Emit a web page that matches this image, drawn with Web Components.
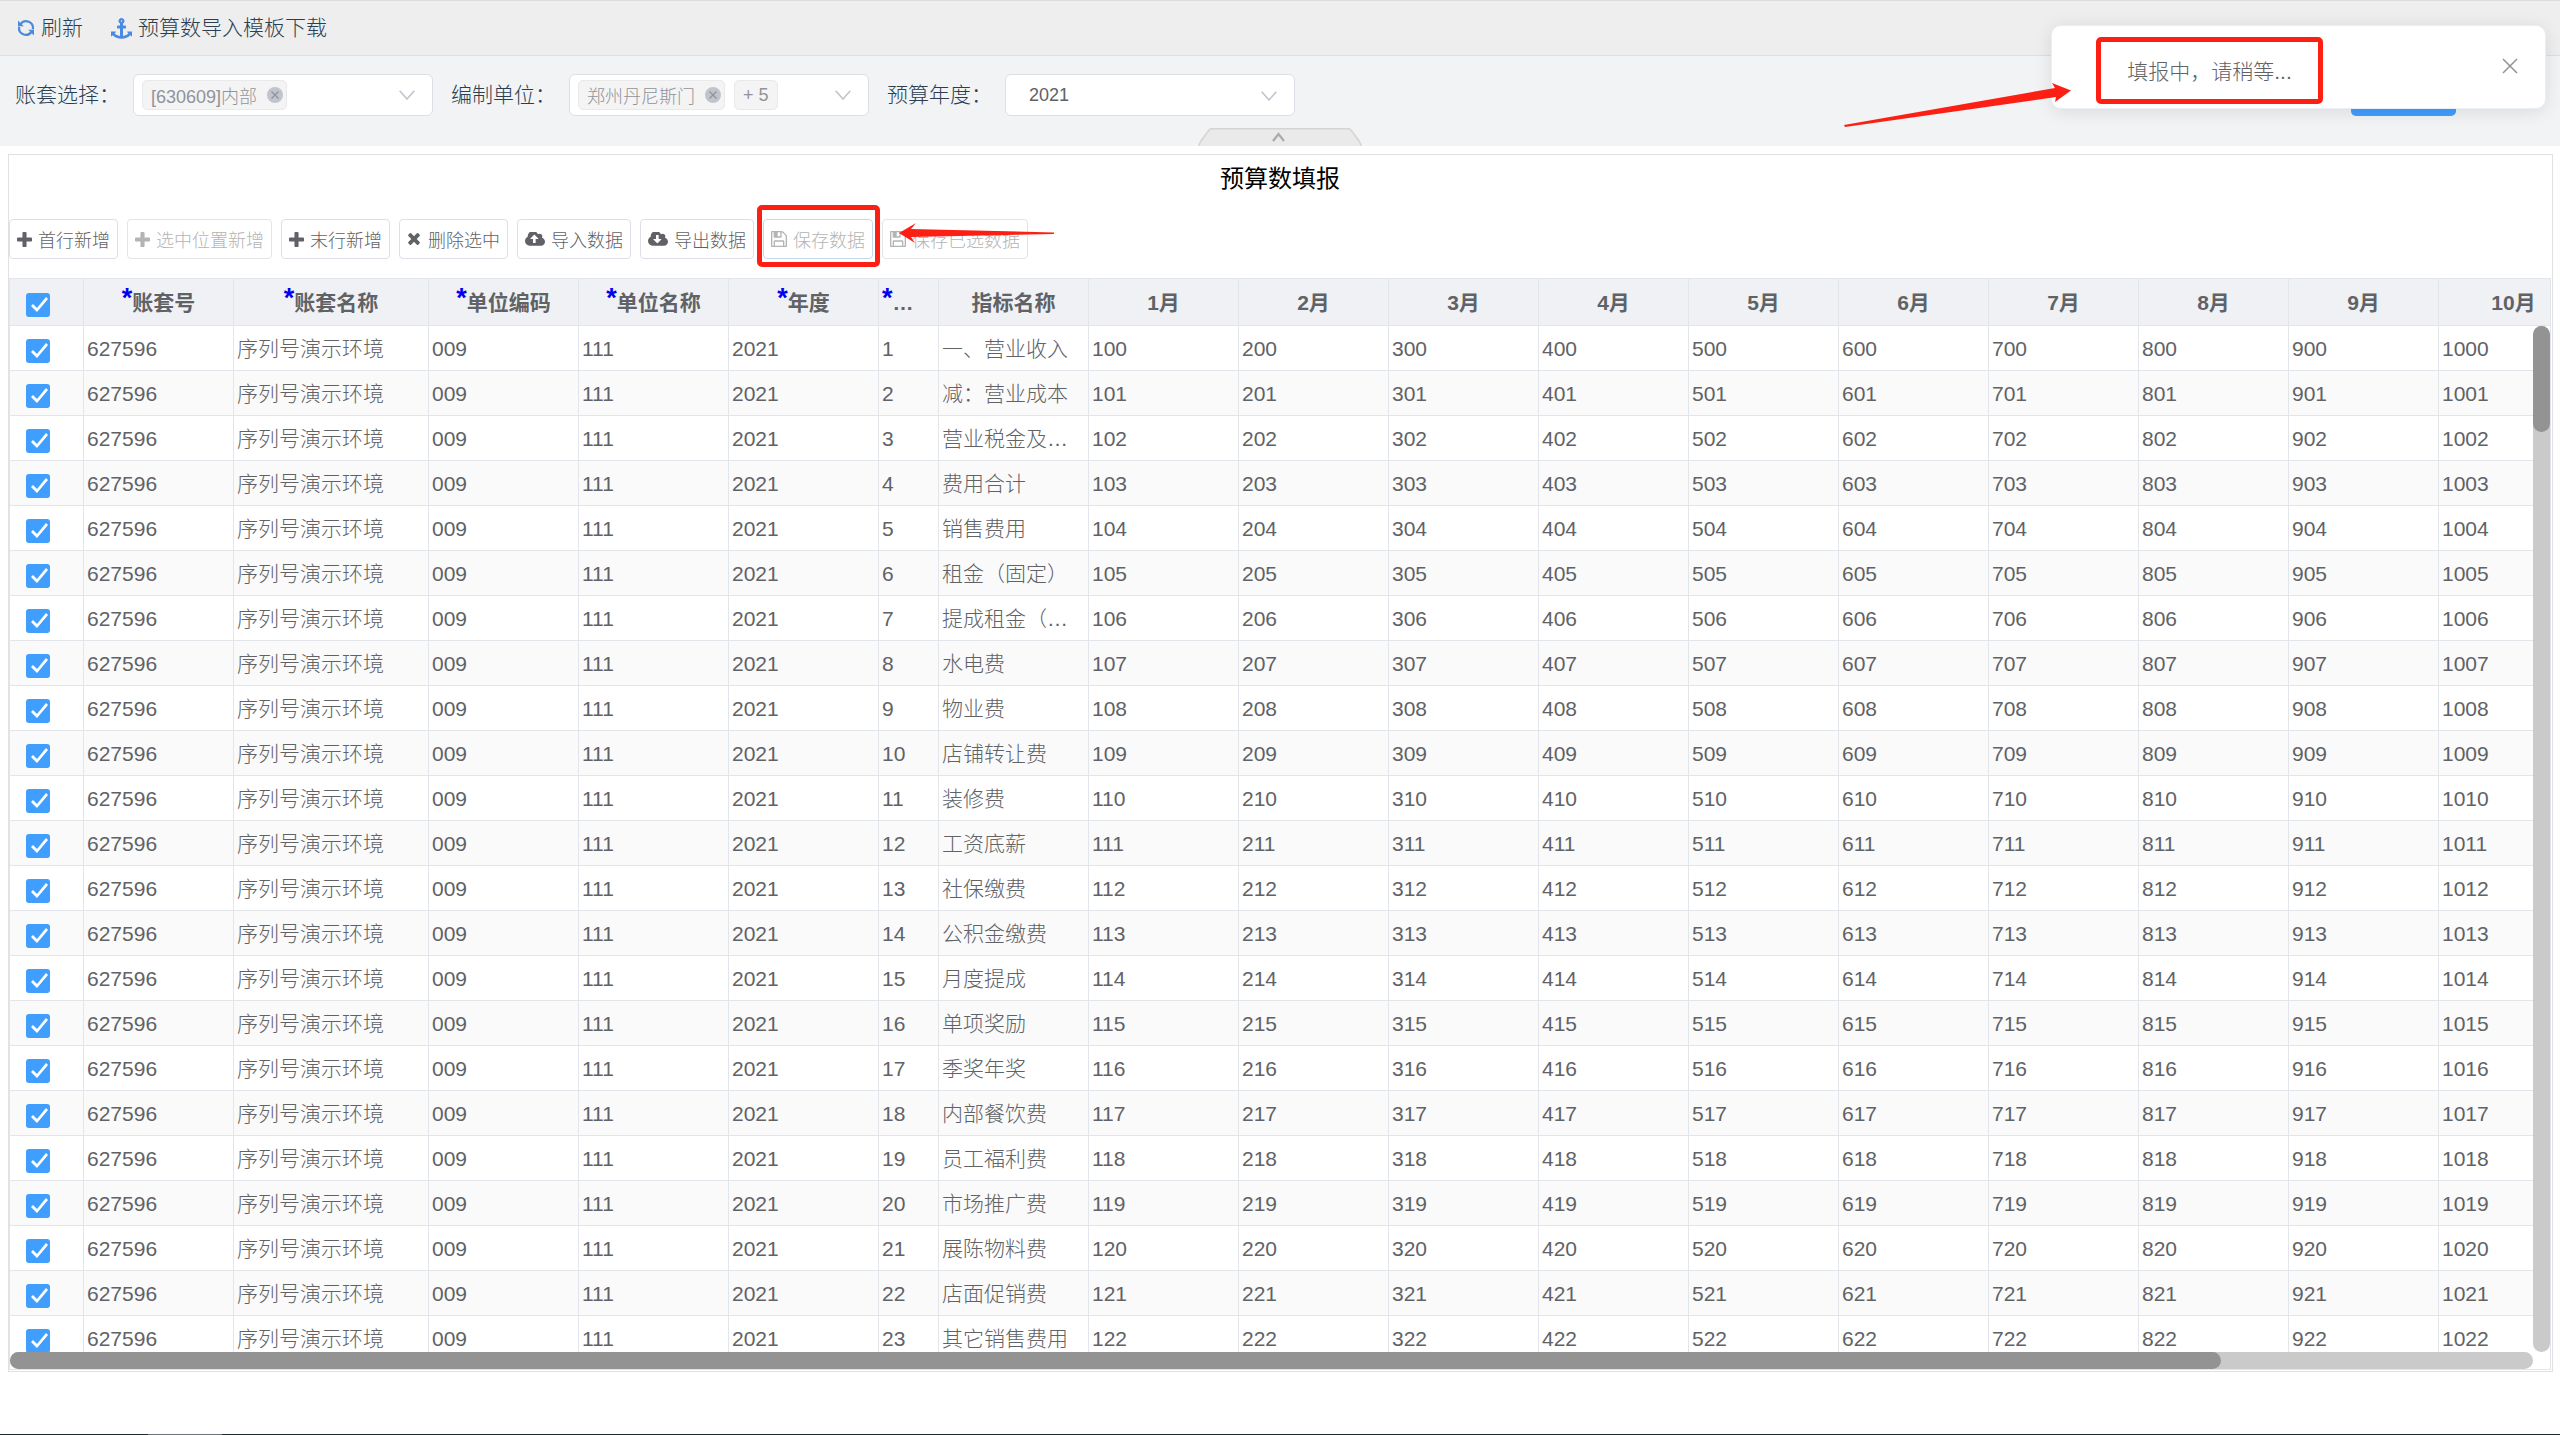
<!DOCTYPE html>
<html lang="zh-CN">
<head>
<meta charset="utf-8">
<title>预算数填报</title>
<style>
html, body { height: 100%; }
body {
  margin: 0;
  overflow: hidden;
  background: #fff;
  font-family: "Liberation Sans", "Noto Sans CJK SC", sans-serif;
  font-weight: 300;
  color: #606266;
}
</style>
</head>
<body>
<budget-page></budget-page>
<script>
const CLOUD = 'M1856 1152q0 159-112.5 271.5t-271.5 112.5h-1088q-185 0-316.5-131.5t-131.5-316.5q0-130 70-240t188-165q-2-30-2-43 0-212 150-362t362-150q156 0 285.5 87t188.5 231q71-62 166-62 106 0 181 75t75 181q0 76-41 138 130 31 213.5 135.5t83.5 238.5z';
const ICONS = {
  plus: ['192 128 1408 1408', '<path d="M1600 736v192q0 40-28 68t-68 28h-416v416q0 40-28 68t-68 28h-192q-40 0-68-28t-28-68v-416h-416q-40 0-68-28t-28-68v-192q0-40 28-68t68-28h416v-416q0-40 28-68t68-28h192q40 0 68 28t28 68v416h416q40 0 68 28t28 68z"/>'],
  times: ['192 256 1408 1408', '<path d="M1490 1322q0 40-28 68l-136 136q-28 28-68 28t-68-28l-294-294-294 294q-28 28-68 28t-68-28l-136-136q-28-28-28-68t28-68l294-294-294-294q-28-28-28-68t28-68l136-136q28-28 68-28t68 28l294 294 294-294q28-28 68-28t68 28l136 136q28 28 28 68t-28 68l-294 294 294 294q28 28 28 68z"/>'],
  upload: ['-64 256 1920 1280', `<path fill-rule="evenodd" d="M1216 864q0-14-9-23l-352-352q-9-9-23-9t-23 9l-351 351q-10 12-10 24 0 14 9 23t23 9h224v352q0 13 9.5 22.5t22.5 9.5h192q13 0 22.5-9.5t9.5-22.5v-352h224q13 0 22.5-9.5t9.5-22.5z${CLOUD}"/>`],
  download: ['-64 256 1920 1280', `<path fill-rule="evenodd" d="M1216 928q0 14-9 23l-352 352q-9 9-23 9t-23-9l-351-351q-10-12-10-24q0-13 9.500-22.500t22.500-9.500h224v-352q0-13 9.500-22.500t22.500-9.500h192q13 0 22.500 9.500t9.500 22.500v352h224q13 0 22.500 9.500t9.500 22.500z${CLOUD}"/>`],
  save: ['128 128 1536 1536', '<path fill-rule="evenodd" d="M512 1536h768v-384h-768v384zm896 0h128v-896q0-14-10-38.500t-20-34.500l-281-281q-10-10-34-20t-39-10v416q0 40-28 68t-68 28h-576q-40 0-68-28t-28-68v-416h-128v1280h128v-416q0-40 28-68t68-28h832q40 0 68 28t28 68v416zm-384-928v-320q0-13-9.500-22.500t-22.500-9.500h-192q-13 0-22.500 9.500t-9.500 22.500v320q0 13 9.500 22.500t22.500 9.500h192q13 0 22.500-9.500t9.500-22.500zm640 32v928q0 40-28 68t-68 28h-1344q-40 0-68-28t-28-68v-1344q0-40 28-68t68-28h928q40 0 88 20t76 48l280 280q28 28 48 76t20 88z"/>'],
  anchor: ['0 0 1792 1792', '<path d="M960 256q0-26-19-45t-45-19-45 19-19 45 19 45 45 19 45-19 19-45zm832 928v352q0 22-20 30-8 2-12 2-12 0-23-9l-93-93q-119 143-318.500 226.500t-429.500 83.500-429.500-83.500-318.500-226.500l-93 93q-9 9-23 9-4 0-12-2-20-8-20-30v-352q0-14 9-23t23-9h352q22 0 30 20 8 19-7 35l-100 100q67 91 189.500 153.500t271.500 82.500v-647h-192q-26 0-45-19t-19-45v-128q0-26 19-45t45-19h192v-163q-58-34-93-92.500t-35-128.500q0-106 75-181t181-75 181 75 75 181q0 70-35 128.500t-93 92.500v163h192q26 0 45 19t19 45v128q0 26-19 45t-45 19h-192v647q149-20 271.500-82.500t189.500-153.500l-100-100q-15-16-7-35 8-20 30-20h352q14 0 23 9t9 23z"/>'],
  refresh: ['0 0 18 18', '<g fill="none" stroke="currentColor" stroke-width="2.200"><path d="M3.600 5A6.800 6.800 0 0 1 15.800 10.200M14.400 13A6.800 6.800 0 0 1 2.200 7.800"/></g><path fill="currentColor" d="M1 1.500V7.300H6.800ZM17 16.500V10.700H11.200Z"/>'],
  down: ['0 0 16 10', '<path fill="none" stroke="currentColor" stroke-width="1.600" d="M.7.7 8 9 15.300.7"/>'],
  close: ['0 0 16 16', '<path fill="none" stroke="currentColor" stroke-width="1.500" d="M1 1l14 14M15 1L1 15"/>'],
  tagclose: ['0 0 16 16', '<circle cx="8" cy="8" r="8" fill="#c0c4cc"/><path stroke="#909399" stroke-width="1.300" d="M4.500 4.500l7 7M11.500 4.500l-7 7"/>']
};
const icon = (n, w, h) => `<svg class="i" viewBox="${ICONS[n][0]}" width="${w}" height="${h || w}" fill="currentColor" aria-hidden="true">${ICONS[n][1]}</svg>`;

function define(name, render) {
  customElements.define(name, class extends HTMLElement {
    constructor() { super(); this.attachShadow({ mode: 'open' }); }
    connectedCallback() {
      this.shadowRoot.innerHTML = '<style>*{box-sizing:border-box}button,input,select{font:inherit;color:inherit}svg{display:block;flex:none}</style>' + render(this);
    }
  });
}

/* Borderless command in the top strip */
define('nav-command', el => `<style>
:host { display: block; }
button { display: flex; align-items: center; gap: 6px; padding: 0; border: 0; background: none; font-size: 21px; line-height: 30px; color: #2c3e50; }
.i { color: #4a8ae0; }
</style><button type="button">${icon(el.getAttribute('icon'), +el.getAttribute('size'))}<slot></slot></button>`);

/* Closable or plain tag in a multiple select */
define('pick-tag', el => `<style>
:host { display: flex; align-items: center; gap: 10px; height: 30px; padding: 0 8px; border: 1px solid #e9e9eb; border-radius: 5px; background: #f4f4f5; color: #909399; font-size: 18px; white-space: nowrap; flex: none; }
:host([closable]) { padding-right: 3px; }
button { padding: 0; border: 0; background: none; border-radius: 8px; }
</style><slot></slot>${el.hasAttribute('closable') ? `<button type="button" aria-label="移除">${icon('tagclose', 16)}</button>` : ''}`);

define('filter-field', el => {
  const single = el.getAttribute('value');
  return `<style>
:host { display: flex; align-items: center; gap: 13px; }
label { font-size: 21px; line-height: 30px; color: #2c3e50; white-space: nowrap; }
.box { position: relative; display: flex; align-items: center; gap: 9px; width: 300px; height: 42px; padding: 0 17px 0 8px; border: 1px solid #dcdfe6; border-radius: 6px; background: #fff; color: #606266; }
.single { width: 290px; padding: 0; }
input { flex: 1; min-width: 0; width: 0; border: 0; outline: 0; background: none; padding: 0; }
select { appearance: none; width: 100%; height: 100%; padding: 0 40px 0 23px; border: 0; background: none; font-size: 18px; }
.box > .i { color: #c0c4cc; }
.single > .i { position: absolute; right: 17px; top: 16px; pointer-events: none; }
</style><label for="c">${el.getAttribute('label')}：</label>
<div class="box ${single ? 'single' : ''}">${single ? `<select id="c"><option>${single}</option></select>` : '<slot></slot><input id="c" readonly>'}${icon('down', 16, 10)}</div>`;
});

define('top-strip', () => `<style>
:host { display: flex; align-items: center; gap: 28px; height: 56px; padding: 0 17px; background: #eee; border-top: 1px solid #dcdcdc; border-bottom: 1px solid #dcdee0; }
</style><slot></slot>`);

define('filter-bar', () => `<style>
:host { position: relative; display: flex; align-items: flex-start; gap: 18px; height: 90px; padding: 18px 104px 0 15px; background: #f1f3f5; }
.query { margin-left: auto; width: 105px; height: 42px; border: 0; border-radius: 5px; background: #409eff; }
.fold { position: absolute; left: 50%; bottom: 0; width: 164px; height: 18px; margin-left: -82px; padding: 0; border: 0; background: none; }
</style><slot></slot><button class="query" type="button" aria-label="查询"></button>
<button class="fold" type="button" aria-label="收起"><svg width="164" height="18" viewBox="0 0 164 18"><path d="M1 18Q1 16 3 13L11 2Q12 .700 14 .700H150Q152 .700 153 2L161 13Q163 16 163 18" fill="#eaeaea" stroke="#d4d4d4" stroke-width="1.500"/><path d="M75 13L80.500 6 86 13" fill="none" stroke="#aaa" stroke-width="2.200"/></svg></button>`);

define('tool-button', el => {
  const n = el.getAttribute('icon');
  const w = { plus: 15, times: 14, upload: 20, download: 20, save: 16 }[n];
  const h = n.endsWith('load') ? 14 : w;
  return `<style>
:host { display: block; position: relative; }
button { display: flex; align-items: center; gap: 6px; height: 40px; padding: 0 7px; border: 1px solid #dcdfe6; border-radius: 4px; background: #fff; font-size: 18px; color: #606266; white-space: nowrap; }
button:disabled { color: #b4b4b4; border-color: #e2e4e8; }
:host([icon="times"]) button { gap: 7px; }
:host([marked]) button { border-color: #c6d8ee; }
:host([marked])::after { content: ""; position: absolute; inset: -14px -7px -8px -6px; border: 5px solid #fc2014; border-radius: 5px; }
.arrow { position: absolute; left: 136px; top: 3px; z-index: 2; }
</style><button type="button" ${el.hasAttribute('off') ? 'disabled' : ''}>${icon(n, w, h)}<slot></slot></button>
${el.hasAttribute('marked') ? '<svg class="arrow" width="156" height="22" viewBox="0 0 156 22" aria-hidden="true"><path fill="#fc2014" d="M0 11L17 1 12 7 155 10.500V12L12 15 16 21Z"/></svg>' : ''}`;
});

const NAMES = ['一、营业收入', '减：营业成本', '营业税金及…', '费用合计', '销售费用', '租金（固定）', '提成租金（…', '水电费', '物业费', '店铺转让费', '装修费', '工资底薪', '社保缴费', '公积金缴费', '月度提成', '单项奖励', '季奖年奖', '内部餐饮费', '员工福利费', '市场推广费', '展陈物料费', '店面促销费', '其它销售费用'];
const MONTHS = Array.from({ length: 10 }, (_, i) => i + 1);
const COLS = [74, 150, 195, 150, 150, 150, 60, 150, ...MONTHS.map(() => 150)];

define('budget-grid', () => {
  const cols = `<colgroup>${COLS.map(w => `<col style="width:${w}px">`).join('')}</colgroup>`;
  const head = ['账套号', '账套名称', '单位编码', '单位名称', '年度'].map(t => `<th><sup>*</sup>${t}</th>`).join('')
    + '<th class="cut"><sup>*</sup>…</th><th>指标名称</th>' + MONTHS.map(m => `<th>${m}月</th>`).join('');
  const rows = NAMES.map((n, r) => `<tr><td class="c"><input type="checkbox" checked aria-label="选择第${r + 1}行"></td>`
    + ['627596', '序列号演示环境', '009', '111', '2021', r + 1, n, ...MONTHS.map(m => m * 100 + r)].map(v => `<td>${v}</td>`).join('') + '</tr>').join('');
  return `<style>
:host { display: flex; flex-direction: column; flex: 1; min-height: 0; border: 1px solid #e2e5e9; font-size: 21px; }
.head { flex: none; overflow: hidden; background: #eff1f4; }
.body { flex: 1; min-height: 0; display: grid; grid-template: minmax(0, 1fr) 17px / minmax(0, 1fr) 17px; }
.view { overflow: hidden; }
table { table-layout: fixed; width: ${COLS.reduce((a, b) => a + b)}px; border-collapse: separate; border-spacing: 0; }
th, td { border: 0 solid #e2e6ea; border-width: 0 1px 1px 0; white-space: nowrap; line-height: 30px; }
th { height: 47px; padding: 2px 0 0; text-align: center; font-weight: 700; }
td { height: 45px; padding: 2px 3px 0; }
tr:nth-child(even) td { background: #fafafa; }
.c { padding: 6px 0 0 16px; text-align: left; }
.cut { padding-left: 3px; text-align: left; }
sup { font-size: 27px; line-height: 0; color: #0000f0; vertical-align: 3px; }
input { appearance: none; display: block; width: 24px; height: 24px; margin: 0; border-radius: 3px; background: #409eff; }
input::before { content: ""; display: block; width: 24px; height: 24px; background: #fff; clip-path: polygon(5px 13px, 7px 11px, 11px 15px, 20px 4px, 22px 6px, 11px 19px); }
.v, .h { background: #cacaca; border-radius: 9px; }
.v i, .h i { display: block; background: #939393; border-radius: 9px; }
.v i { height: 106px; }
.h i { height: 17px; width: 87.640%; }
</style><div class="head"><table aria-label="表头">${cols}<thead><tr><th class="c"><input type="checkbox" checked aria-label="全选"></th>${head}</tr></thead></table></div>
<div class="body"><div class="view"><table aria-label="预算数">${cols}<tbody>${rows}</tbody></table></div><div class="v"><i></i></div><div class="h"><i></i></div></div>`;
});

define('budget-panel', () => `<style>
:host { display: flex; flex-direction: column; flex: 1; min-height: 0; margin: 8px 7px 62px 8px; padding: 0 1px 1px 0; border: 1px solid #dfe1e4; }
h1 { margin: 0; font-size: 24px; line-height: 48px; font-weight: 400; text-align: center; color: #000; }
.tools { display: flex; gap: 9px; padding: 16px 0 19px; }
</style><h1>预算数填报</h1><div class="tools">
<tool-button icon="plus">首行新增</tool-button><tool-button icon="plus" off>选中位置新增</tool-button><tool-button icon="plus">末行新增</tool-button><tool-button icon="times">删除选中</tool-button><tool-button icon="upload">导入数据</tool-button><tool-button icon="download">导出数据</tool-button><tool-button icon="save" off marked style="z-index:1">保存数据</tool-button><tool-button icon="save" off>保存已选数据</tool-button>
</div><budget-grid></budget-grid>`);

define('toast-note', () => `<style>
:host { position: absolute; top: 25px; right: 14px; display: flex; align-items: center; justify-content: space-between; width: 495px; height: 84px; padding: 0 27px 0 44px; border: 1px solid #ebeef5; border-radius: 10px; background: #fff; box-shadow: 0 3px 18px rgba(0,0,0,.1); z-index: 3; box-sizing: border-box; }
p { display: flex; align-items: center; justify-content: center; width: 227px; height: 67px; margin: 6px 0 0; padding: 4px 0 0; border: 5px solid #fc2014; border-radius: 5px; font-size: 21px; line-height: 30px; }
button { padding: 0; margin-bottom: 2px; border: 0; background: none; color: #909399; }
.arrow { position: absolute; left: -208px; top: 56px; }
</style><p role="status"><slot></slot></p><button type="button" aria-label="关闭">${icon('close', 16)}</button>
<svg class="arrow" width="230" height="46" viewBox="0 0 230 46" aria-hidden="true"><path fill="#fc2014" d="M0 43L211 6 208 1 227 8.500 211 20 212 15 1 45Z"/></svg>`);

define('budget-page', () => `<style>
:host { position: relative; display: flex; flex-direction: column; height: 100vh; overflow: hidden; }
footer { flex: none; height: 1px; background: linear-gradient(90deg, #1c2b2e 148px, #6b7476 148px 222px, #1c2b2e 222px); }
top-strip, filter-bar { flex: none; box-sizing: border-box; }
</style>
<top-strip><nav-command icon="refresh" size="18">刷新</nav-command><nav-command icon="anchor" size="21">预算数导入模板下载</nav-command></top-strip>
<filter-bar>
<filter-field label="账套选择"><pick-tag closable>[630609]内部</pick-tag></filter-field>
<filter-field label="编制单位"><pick-tag closable>郑州丹尼斯门</pick-tag><pick-tag>+ 5</pick-tag></filter-field>
<filter-field label="预算年度" value="2021"></filter-field>
</filter-bar>
<budget-panel></budget-panel>
<footer></footer>
<toast-note>填报中，请稍等...</toast-note>`);
</script>
</body>
</html>
